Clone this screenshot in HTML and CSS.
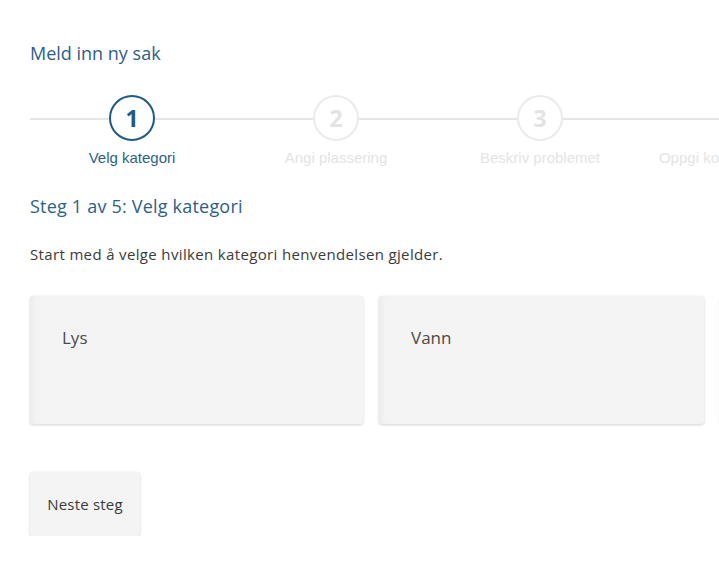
FILE: index.html
```html
<!DOCTYPE html>
<html lang="no">
<head>
<meta charset="utf-8">
<title>Meld inn ny sak</title>
<link rel="stylesheet" href="styles.css">
</head>
<body>
<main class="page">
  <h1 class="title">Meld inn ny sak</h1>
  <ol class="stepper">
    <li class="step active"><span class="circle">1</span><span class="label">Velg kategori</span></li>
    <li class="step"><span class="circle">2</span><span class="label">Angi plassering</span></li>
    <li class="step"><span class="circle">3</span><span class="label">Beskriv problemet</span></li>
    <li class="step"><span class="circle">4</span><span class="label">Oppgi kontaktinformasjon</span></li>
    <li class="step"><span class="circle">5</span><span class="label">Oppsummering</span></li>
  </ol>
  <h2 class="subtitle">Steg 1 av 5: Velg kategori</h2>
  <p class="intro">Start med å velge hvilken kategori henvendelsen gjelder.</p>
  <div class="cards">
    <button class="card">Lys</button>
    <button class="card">Vann</button>
    <button class="card">Vei</button>
  </div>
  <button class="next">Neste steg</button>
</main>
</body>
</html>
```
FILE: styles.css
```css
html, body {
  margin: 0;
  padding: 0;
  background: #fff;
  overflow: hidden;
}
body {
  font-family: "Open Sans", "Liberation Sans", sans-serif;
  color: #3b3b3b;
}
.page {
  padding: 0 0 0 30px;
  width: 1100px;
}
.title {
  margin: 0;
  padding-top: 41px;
  font-size: 18px;
  line-height: 24px;
  font-weight: 400;
  color: #2d5f86;
}
.stepper {
  list-style: none;
  margin: 30px 0 0 0;
  padding: 0;
  display: flex;
  position: relative;
}
.stepper::before {
  content: "";
  position: absolute;
  left: 0;
  right: 0;
  top: 23px;
  height: 2px;
  background: #e6e6e6;
}
.step {
  width: 204px;
  flex: none;
  display: flex;
  flex-direction: column;
  align-items: center;
  position: relative;
}
.circle {
  width: 42px;
  height: 42px;
  border: 2px solid #ebebeb;
  border-radius: 50%;
  background: #fff;
  display: flex;
  align-items: center;
  justify-content: center;
  font-family: "Open Sans", sans-serif;
  font-weight: 700;
  font-size: 23px;
  color: #e3e3e3;
}
.label {
  margin-top: 9px;
  font-family: "Liberation Sans", Arial, sans-serif;
  font-size: 15px;
  line-height: 16px;
  color: #e4e4e4;
  white-space: nowrap;
}
.active .circle {
  border-color: #1f5b86;
  color: #1f5b86;
}
.active .label {
  color: #2d5f86;
}
.subtitle {
  margin: 28px 0 0 0;
  font-size: 18px;
  line-height: 24px;
  font-weight: 400;
  letter-spacing: 0.2px;
  color: #2d5f86;
}
.intro {
  margin: 26px 0 0 0;
  font-size: 15px;
  line-height: 20px;
  letter-spacing: 0.35px;
  color: #3b3b3b;
}
.cards {
  margin-top: 32px;
  display: grid;
  grid-template-columns: 333px 325px 325px;
  column-gap: 16px;
}
.card {
  height: 128px;
  border: 0;
  border-radius: 3px;
  background: #f4f4f4;
  box-shadow: inset 5px 0 4px -2px #ebebeb, 0 1px 3px rgba(0,0,0,0.18);
  text-align: left;
  display: flex;
  align-items: flex-start;
  padding: 31px 32px;
  font-family: "Open Sans", sans-serif;
  font-size: 17px;
  line-height: 22px;
  color: #4a4a4a;
}
.next {
  display: block;
  margin-top: 48px;
  width: 110px;
  height: 64px;
  border: 0;
  border-radius: 3px;
  background: #f4f4f4;
  box-shadow: 0 1px 3px rgba(0,0,0,0.18);
  font-family: "Open Sans", sans-serif;
  font-size: 15px;
  letter-spacing: 0.2px;
  color: #3b3b3b;
  padding: 0;
}
```
